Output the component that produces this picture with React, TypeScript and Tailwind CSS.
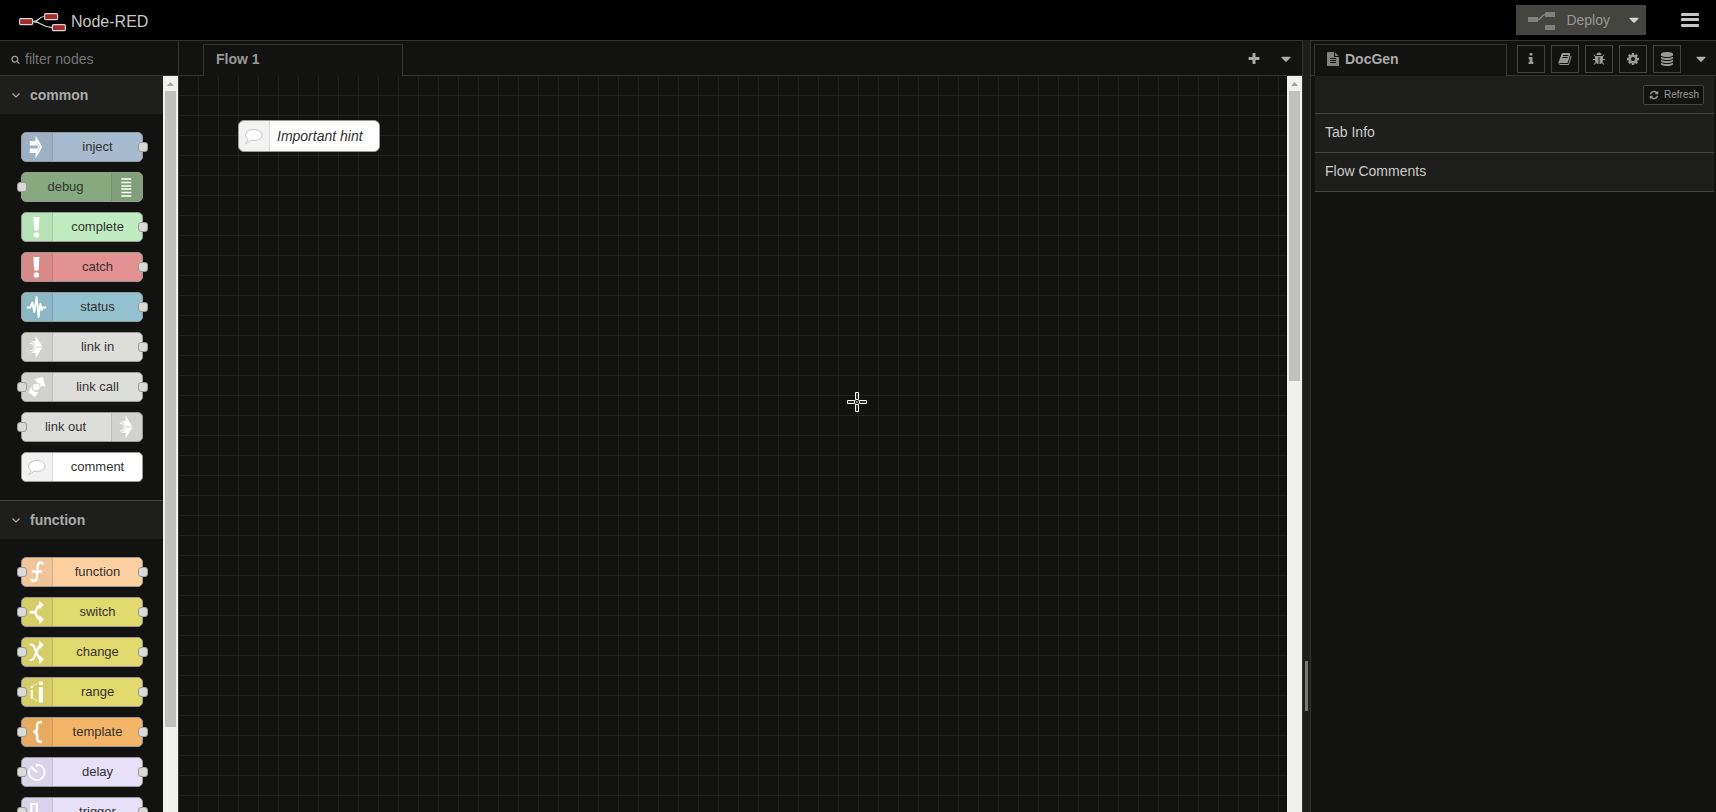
import type { ReactNode } from "react";

const FA = {
  caretDown:
    "M1408 704q0 26-19 45l-448 448q-19 19-45 19t-45-19l-448-448q-19-19-19-45t19-45 45-19h896q26 0 45 19t19 45z",
  plus: "M1600 736v192q0 40-28 68t-68 28h-416v416q0 40-28 68t-68 28h-192q-40 0-68-28t-28-68v-416h-416q-40 0-68-28t-28-68v-192q0-40 28-68t68-28h416v-416q0-40 28-68t68-28h192q40 0 68 28t28 68v416h416q40 0 68 28t28 68z",
  cog: "M1152 896q0-106-75-181t-181-75-181 75-75 181 75 181 181 75 181-75 75-181zm512-109v222q0 12-8 23t-20 13l-185 28q-19 54-39 91 35 50 107 138 10 12 10 25t-9 23q-27 37-99 108t-94 71q-12 0-26-9l-138-108q-44 23-91 38-16 136-29 186-7 28-36 28h-222q-14 0-24.500-8.500t-11.500-21.500l-28-184q-49-16-90-37l-141 107q-10 9-25 9-14 0-25-11-126-114-165-168-7-10-7-23 0-12 8-23 15-21 51-66.500t54-70.500q-27-50-41-99l-183-27q-13-2-21-12.500t-8-23.500v-222q0-12 8-23t19-13l186-28q14-46 39-92-40-57-107-138-10-12-10-24 0-10 9-23 26-36 98.500-107.500t94.500-71.500q13 0 26 10l138 107q44-23 91-38 16-136 29-186 7-28 36-28h222q14 0 24.500 8.500t11.500 21.500l28 184q49 16 90 37l142-107q9-9 24-9 13 0 25 10 129 119 165 170 7 8 7 22 0 12-8 23-15 21-51 66.500t-54 70.500q26 50 41 98l183 28q13 2 21 12.500t8 23.500z",
  search:
    "M1216 832q0-185-131.500-316.500t-316.500-131.500-316.500 131.500-131.500 316.500 131.500 316.500 316.500 131.500 316.500-131.500 131.500-316.500zm512 832q0 52-38 90t-90 38q-54 0-90-38l-343-342q-179 124-399 124-143 0-273.500-55.500t-225-150-150-225-55.500-273.500 55.500-273.500 150-225 225-150 273.500-55.500 273.500 55.500 225 150 150 225 55.500 273.500q0 220-124 399l343 343q37 37 37 90z",
  refresh:
    "M1639 1056q0 5-1 7-64 268-268 434.500t-478 166.500q-146 0-282.500-55t-243.500-157l-129 129q-19 19-45 19t-45-19-19-45v-448q0-26 19-45t45-19h448q26 0 45 19t19 45-19 45l-137 137q71 66 161 102t187 36q134 0 250-65t186-179q11-17 53-117 8-23 30-23h192q13 0 22.500 9.500t9.500 22.500zm25-800v448q0 26-19 45t-45 19h-448q-26 0-45-19t-19-45 19-45l138-138q-148-137-349-137-134 0-250 65t-186 179q-11 17-53 117-8 23-30 23h-199q-13 0-22.500-9.500t-9.500-22.500v-7q65-268 270-434.500t480-166.500q146 0 284 55.500t245 156.500l130-129q19-19 45-19t45 19 19 45z",
  info: "M1216 1344v128q0 26-19 45t-45 19h-512q-26 0-45-19t-19-45v-128q0-26 19-45t45-19h64v-384h-64q-26 0-45-19t-19-45v-128q0-26 19-45t45-19h384q26 0 45 19t19 45v576h64q26 0 45 19t19 45zm-128-1152v192q0 26-19 45t-45 19h-256q-26 0-45-19t-19-45v-192q0-26 19-45t45-19h256q26 0 45 19t19 45z",
  fileText:
    "M1596 476q14 14 28 36h-472v-472q22 14 36 28zm-476 164h544v1056q0 40-28 68t-68 28h-1344q-40 0-68-28t-28-68v-1600q0-40 28-68t68-28h800v544q0 40 28 68t68 28zm160 736v-64q0-14-9-23t-23-9h-704q-14 0-23 9t-9 23v64q0 14 9 23t23 9h704q14 0 23-9t9-23zm0-256v-64q0-14-9-23t-23-9h-704q-14 0-23 9t-9 23v64q0 14 9 23t23 9h704q14 0 23-9t9-23zm0-256v-64q0-14-9-23t-23-9h-704q-14 0-23 9t-9 23v64q0 14 9 23t23 9h704q14 0 23-9t9-23z",
  database:
    "M896 768q237 0 443-43t325-127v170q0 69-103 128t-280 93.500-385 34.500-385-34.500-280-93.500-103-128v-170q119 84 325 127t443 43zm0 768q237 0 443-43t325-127v170q0 69-103 128t-280 93.500-385 34.500-385-34.500-280-93.500-103-128v-170q119 84 325 127t443 43zm0-384q237 0 443-43t325-127v170q0 69-103 128t-280 93.500-385 34.500-385-34.500-280-93.500-103-128v-170q119 84 325 127t443 43zm0-1152q208 0 385 34.500t280 93.500 103 128v128q0 69-103 128t-280 93.500-385 34.500-385-34.500-280-93.500-103-128v-128q0-69 103-128t280-93.500 385-34.500z",
  book: "M1703 478q40 57 18 129l-275 906q-19 64-76.500 107.500t-122.500 43.500h-923q-77 0-148.500-53.500t-99.500-131.500q-24-67-2-127 0-4 3-27t4-37q1-8-3-21.500t-3-19.500q2-11 8-21t16.500-23.500 16.500-23.500q23-38 45-91.500t30-91.500q3-10 .5-30t-.5-28q3-11 17-28t17-23q21-36 42-92t25-90q1-9-2.500-32t.5-28q4-13 22-30.500t22-22.500q19-26 42.500-84.500t27.500-96.500q1-8-3-25.500t-2-26.500q2-8 9-18t18-23 17-21q8-12 16.500-30.500t15-35 16-36 19.500-32 26.500-23.500 36-11.500 47.500 5.500l-1 3q38-9 51-9h761q74 0 114 56t18 130l-274 906q-36 119-71.500 153.500t-128.500 34.500h-869q-27 0-38 15-11 16-1 43 24 70 144 70h923q29 0 56-15.500t35-41.500l300-987q7-22 5-57 38 15 59 43zm-1064 2q-4 13 2 22.500t20 9.500h608q13 0 25.500-9.500t16.500-22.500l21-64q4-13-2-22.500t-20-9.500h-608q-13 0-25.500 9.500t-16.500 22.500zm-83 256q-4 13 2 22.500t20 9.500h608q13 0 25.500-9.500t16.500-22.500l21-64q4-13-2-22.500t-20-9.500h-608q-13 0-25.500 9.500t-16.500 22.500z",
  bug: "M1696 960q0 26-19 45t-45 19h-224q0 171-67 290l208 209q19 19 19 45t-19 45q-18 19-45 19t-45-19l-198-197q-5 5-15 13t-42 28.500-65 36.500-82 29-97 13v-896h-128v896q-51 0-101.500-13.500t-87-33-66-39-43.500-32.500l-15-14-183 207q-20 21-48 21-24 0-43-16-19-18-20.500-44.500t15.500-46.500l202-227q-58-114-58-274h-224q-26 0-45-19t-19-45 19-45 45-19h224v-294l-173-173q-19-19-19-45t19-45 45-19 45 19l173 173h844l173-173q19-19 45-19t45 19 19 45-19 45l-173 173v294h224q26 0 45 19t19 45zm-480-576h-640q0-133 93.500-226.500t226.500-93.500 226.500 93.500 93.500 226.500z",
};

function Fa({ d, className = "size-3.5" }: { d: string; className?: string }) {
  return (
    <svg viewBox="0 0 1792 1792" fill="currentColor" aria-hidden="true" className={`${className} shrink-0`}>
      <path d={d} />
    </svg>
  );
}

const ICONS: Record<string, ReactNode> = {
  inject: (
    <>
      <path d="M8.500 8h5.800V2.800L21 14l-6.700 11.200V20H8.500v-4.600h8v-2.800h-8z" fill="#fff" />
      <path d="M16 10l2.500 4-2.500 4" fill="none" stroke="#9db0c3" strokeWidth=".6" />
    </>
  ),
  debug: <path d="M10 6h10M10 9.500h10M10 13h10M10 16h10M10 19.500h10M10 23h10" stroke="#fff" strokeWidth="1.300" />,
  alert: (
    <>
      <path d="M12 4h6.200l-1 13.500h-4.200z" fill="#fff" />
      <circle cx="15.100" cy="22" r="2.700" fill="#fff" />
    </>
  ),
  status: (
    <path
      d="M5.500 14.500H9l2-5 2 9.500 2.300-15 2 20 1.700-13 1.500 6 1-2.500h3.500"
      fill="none"
      stroke="#fff"
      strokeWidth="1.900"
      strokeLinejoin="round"
    />
  ),
  link: (
    <>
      <path
        d="M14.300 2.800L21 13.400h-7A5.800 5.800 0 0 0 9.500 8.300l4.800-.2zM14.300 25.200L21 14.600h-7a5.800 5.800 0 0 1-4.500 5.100l4.800.2z"
        fill="#fff"
      />
      <path d="M8.500 10.400h1a3.600 3.600 0 0 1 0 7.200h-1" fill="none" stroke="#fff" strokeWidth="1.200" />
    </>
  ),
  linkCall: (
    <g fill="#fff">
      <path d="M12 6.500L21.500 4l2.700 10-3.200-1.500-1.700 2.200A5 5 0 0 0 14 9l1.500-1.500z" />
      <circle cx="15" cy="14" r="3.300" />
      <path d="M10.500 13L7.300 19.500l6.400 4.500 3.500-5.300A5 5 0 0 1 10.500 13z" />
    </g>
  ),
  bubble: (
    <path
      d="M15.500 7.500c4.600 0 8.200 2.400 8.200 5.500s-3.600 5.500-8.200 5.500c-1 0-2-.1-2.900-.4-1.200 1.700-3 2.900-5.300 3.100 1.400-.9 2-2.100 2.200-4-1.400-1-2.200-2.500-2.200-4.100 0-3.200 3.600-5.600 8.200-5.600z"
      fill="#fff"
      stroke="#c4c4c2"
      strokeWidth="1"
    />
  ),
  function: (
    <path
      d="M21.500 6.500c-.3-2.800-4.700-3-5 1.500l-1 11.500c-.4 4.500-5 4-5.500 1.200M10.500 13.500h10"
      fill="none"
      stroke="#fff"
      strokeWidth="2.300"
    />
  ),
  switch: (
    <g fill="none" stroke="#fff" strokeWidth="2.400">
      <path d="M8.500 14.300H13c3-1 2-6.800 6.500-7.300h1M13 14.300c3 1 2 6.700 6.500 7.200h1" />
      <path d="M18 2.500l4.500 4.500-4.500 4.500zM18 17l4.500 4.500L18 26z" fill="#fff" stroke="none" />
    </g>
  ),
  change: (
    <g fill="none" stroke="#fff" strokeWidth="2.200">
      <path d="M8.500 6.500h1.300c2.200 0 2.700 1.500 3.700 4l3 7c1 2.500 1.500 4 4 4M8.500 22h1.300c2.200 0 2.700-1.500 3.700-4l3-7c1-2.500 1.500-4 4-4" />
      <path d="M18 2.500l4.500 4.500-4.500 4.500zM18 17l4.500 4.500L18 26z" fill="#fff" stroke="none" />
    </g>
  ),
  range: (
    <g fill="#fff">
      <path d="M17.500 3.500h4V7h-4zM17.500 9h4v15.500h-4zM9.500 8h2v2.200h-2zM9.500 12h2v8.500h-2z" />
      <path d="M12 7.500l5-2.500M12 20.500l5 2.500" stroke="#fff" strokeWidth="1" strokeDasharray="1.500 1" />
    </g>
  ),
  template: (
    <path
      d="M20.500 4c-4 0-4.700 1-4.700 3.500v3c0 2-1 3.200-3.800 3.200 2.800 0 3.800 1.200 3.800 3.200v3c0 2.500.7 4 4.700 4"
      fill="none"
      stroke="#fff"
      strokeWidth="2.500"
    />
  ),
  delay: (
    <g fill="none" stroke="#fff" strokeWidth="1.600">
      <path d="M15.500 6.500a7.800 7.800 0 1 1-6.700 3.800M15.500 6v3" />
      <path d="M9.500 8.500l6 5.500" strokeWidth="2.300" />
    </g>
  ),
  trigger: <path d="M7 21h3V6h5.500v15h6" fill="none" stroke="#fff" strokeWidth="2.200" />,
};

type NodeDef = {
  label: string;
  icon: string;
  bg: string;
  input?: boolean;
  output?: boolean;
  iconRight?: boolean;
};

const COMMON: NodeDef[] = [
  { label: "inject", icon: "inject", bg: "bg-[#a6bbcf]", output: true },
  { label: "debug", icon: "debug", bg: "bg-[#87a980]", input: true, iconRight: true },
  { label: "complete", icon: "alert", bg: "bg-[#c0edc0]", output: true },
  { label: "catch", icon: "alert", bg: "bg-[#e49191]", output: true },
  { label: "status", icon: "status", bg: "bg-[#94c1d0]", output: true },
  { label: "link in", icon: "link", bg: "bg-[#dddddb]", output: true },
  { label: "link call", icon: "linkCall", bg: "bg-[#dddddb]", input: true, output: true },
  { label: "link out", icon: "link", bg: "bg-[#dddddb]", input: true, iconRight: true },
  { label: "comment", icon: "bubble", bg: "bg-white" },
];

const FUNCTION: NodeDef[] = [
  { label: "function", icon: "function", bg: "bg-[#fdd0a2]", input: true, output: true },
  { label: "switch", icon: "switch", bg: "bg-[#e2d96e]", input: true, output: true },
  { label: "change", icon: "change", bg: "bg-[#e2d96e]", input: true, output: true },
  { label: "range", icon: "range", bg: "bg-[#e2d96e]", input: true, output: true },
  { label: "template", icon: "template", bg: "bg-[#f3b567]", input: true, output: true },
  { label: "delay", icon: "delay", bg: "bg-[#e6e0f8]", input: true, output: true },
  { label: "trigger", icon: "trigger", bg: "bg-[#e6e0f8]", input: true, output: true },
];

function NodeIcon({ name, right = false }: { name: string; right?: boolean }) {
  return (
    <span
      className={`flex w-[31px] shrink-0 self-stretch items-center justify-center border-black/10 bg-black/5 ${
        right ? "order-last rounded-r-[4px] border-l" : "rounded-l-[4px] border-r"
      }`}
    >
      <svg viewBox="0.7 0 30 28" className="h-7 w-[30px]" aria-hidden="true">
        {ICONS[name]}
      </svg>
    </span>
  );
}

function PaletteNode({ node }: { node: NodeDef }) {
  const port = "absolute top-[9px] size-2.5 rounded-[3px] border border-[#999997] bg-[#d9d9d6]";
  return (
    <li className={`relative flex h-[30px] w-[122px] items-center rounded-[5px] border border-[#999997] ${node.bg}`}>
      <NodeIcon name={node.icon} right={node.iconRight} />
      <span className={`flex-1 text-center text-[13px] leading-5 text-[#333331] ${node.iconRight ? "pr-0.5" : ""}`}>
        {node.label}
      </span>
      {node.input && <span className={`${port} -left-[5px]`} />}
      {node.output && <span className={`${port} -right-[6px]`} />}
    </li>
  );
}

function Category({ title, nodes, divided }: { title: string; nodes: NodeDef[]; divided?: boolean }) {
  return (
    <section>
      <button
        type="button"
        className={`flex w-full items-center bg-[#1e1e1c] pl-[11px] text-left text-sm font-bold text-[#aaaaa8] ${
          divided ? "h-[39px] border-t border-[#444442]" : "h-[38px]"
        }`}
      >
        <svg viewBox="0 0 10 10" className="mr-[9px] size-2.5" aria-hidden="true">
          <path d="M1.500 3.500L5 7l3.500-3.500" fill="none" stroke="currentColor" strokeWidth="1.200" />
        </svg>
        {title}
      </button>
      <ul className="flex flex-col gap-2.5 py-[18px] pl-[21px]">
        {nodes.map((n) => (
          <PaletteNode key={n.label} node={n} />
        ))}
      </ul>
    </section>
  );
}

function Scrollbar({ thumb }: { thumb: string }) {
  return (
    <div className="flex w-[15px] shrink-0 flex-col items-center bg-[#f0f0ee]" aria-hidden="true">
      <svg viewBox="0 0 15 15" className="size-[15px] shrink-0">
        <path d="M4 10l3.500-4L11 10z" fill="#a0a09e" />
      </svg>
      <div className={`w-[11px] bg-[#c0c0be] ${thumb}`} />
    </div>
  );
}

const SIDE_TABS = [
  { name: "Information", d: FA.info },
  { name: "Help", d: FA.book },
  { name: "Debug", d: FA.bug },
  { name: "Configuration", d: FA.cog },
  { name: "Context data", d: FA.database },
];

export default function App() {
  return (
    <div className="flex h-screen flex-col overflow-hidden bg-[#121210] font-['Liberation_Sans',Arial,sans-serif] text-sm text-[#aaaaa8]">
      <header className="flex h-10 shrink-0 items-center justify-between bg-black pl-[19px] pr-[17px]">
        <a href="#" className="flex items-center gap-[5px] pt-1 text-base text-[#c7c7c5]">
          <svg viewBox="0 0 47 20" className="h-5 w-[47px]" aria-hidden="true">
            <g fill="none" stroke="#d4d4d2" strokeWidth="1.200">
              <path d="M14 9.700c7 0 5-5.200 11.500-5.200M14 9.700c9 0 9 6 19.500 6" />
              <g fill="#a02c2c">
                <rect x=".6" y="6.600" width="13" height="6" rx="1.200" />
                <rect x="25.600" y="1.600" width="13" height="6" rx="1.200" />
                <rect x="33.400" y="12.600" width="13" height="6" rx="1.200" />
              </g>
            </g>
          </svg>
          Node-RED
        </a>
        <div className="flex items-center">
          <div className="flex h-[30px] bg-[#444440] text-[#989894]">
            <button type="button" className="flex items-center gap-[11px] px-3">
              <svg viewBox="0 0 27 18" className="mt-0.5 h-[18px] w-[27px]" aria-hidden="true">
                <path d="M0 5h10v5H0zM17 0h10v5H17zM17 13h10v5H17z" fill="#80807e" />
                <path d="M10 7.500c4 0 3-5 7-5" fill="none" stroke="#80807e" strokeWidth="1.500" />
              </svg>
              Deploy
            </button>
            <button type="button" aria-label="Deploy options" className="flex w-6 items-center justify-center text-[#d4d4d2]">
              <Fa d={FA.caretDown} className="size-4" />
            </button>
          </div>
          <button type="button" aria-label="Main menu" className="ml-[35px] text-[#c7c7c5]">
            <svg viewBox="0 0 18 14" className="h-3.5 w-[18px]" fill="currentColor" aria-hidden="true">
              <rect width="18" height="3" rx="1" />
              <rect y="5" width="18" height="3" rx="1" />
              <rect y="11" width="18" height="3" rx="1" />
            </svg>
          </button>
        </div>
      </header>

      <div className="flex min-h-0 flex-1">
        <aside className="flex w-[179px] shrink-0 flex-col border-r border-t border-[#333331]">
          <label className="flex h-[35px] shrink-0 items-center gap-[5px] border-b border-[#333331] pl-[11px] pt-0.5">
            <Fa d={FA.search} className="size-[9px] text-[#a0a09e]" />
            <input
              type="text"
              aria-label="filter nodes"
              placeholder="filter nodes"
              className="w-full min-w-0 bg-transparent text-sm outline-none placeholder:text-[#777775]"
            />
          </label>
          <div className="flex min-h-0 flex-1">
            <div className="min-w-0 flex-1 overflow-hidden">
              <Category title="common" nodes={COMMON} />
              <Category title="function" nodes={FUNCTION} divided />
            </div>
            <Scrollbar thumb="h-[636px]" />
          </div>
        </aside>

        <main className="flex min-w-0 flex-1 flex-col border-r border-t border-[#333331]">
          <nav className="flex h-[35px] shrink-0 items-stretch">
            <span className="w-6 border-b border-[#333331]" />
            <button
              type="button"
              className="mt-[3px] w-[200px] border-x border-t border-[#333331] pb-1 pl-3 text-left font-bold text-[#999997]"
            >
              Flow 1
            </button>
            <span className="flex flex-1 items-center justify-end border-b border-[#333331] pt-0.5">
              <button type="button" aria-label="Add flow" className="flex w-8 justify-center">
                <Fa d={FA.plus} />
              </button>
              <button type="button" aria-label="List flows" className="flex w-8 justify-center">
                <Fa d={FA.caretDown} className="size-4" />
              </button>
            </span>
          </nav>
          <div className="flex min-h-0 flex-1">
            <div className="relative flex-1 overflow-hidden bg-[linear-gradient(to_right,transparent_19px,#20201e_19px),linear-gradient(to_bottom,transparent_19px,#20201e_19px)] bg-[size:20px_20px]">
              <div className="absolute left-[59px] top-11 flex h-8 w-[142px] items-center rounded-[6px] border border-[#999997] bg-white">
                <NodeIcon name="bubble" />
                <span className="pl-[7px] italic text-[#333331]">Important hint</span>
              </div>
              <svg
                viewBox="0 0 20 20"
                className="absolute left-[668px] top-[316px] size-5"
                fill="#30302e"
                stroke="#fff"
                aria-hidden="true"
              >
                <path d="M8.500 7.500v-7h3v7zM8.500 12.500v7h3v-7zM7.500 8.500h-7v3h7zM12.500 8.500h7v3h-7z" />
                <path d="M8 8l4 4M12 8l-4 4" stroke="#888886" />
              </svg>
            </div>
            <Scrollbar thumb="h-[290px]" />
          </div>
        </main>

        <div className="flex w-[7px] shrink-0 flex-col bg-[#1e1e1c] pl-0.5 pt-[621px]">
          <span className="h-[50px] w-[3px] bg-[#777775]" />
        </div>

        <aside className="flex w-[406px] shrink-0 flex-col border-l border-t border-[#333331]">
          <nav className="flex h-[35px] shrink-0 items-stretch">
            <span className="w-[3px] border-b border-[#333331]" />
            <button
              type="button"
              className="mt-[3px] flex w-[193px] items-center gap-[5px] border-x border-t border-[#333331] pb-1 pl-[11px] font-bold text-[#aaaaa8]"
            >
              <Fa d={FA.fileText} className="size-3.5 text-[#80807e]" />
              DocGen
            </button>
            <span className="flex flex-1 items-center gap-1.5 border-b border-[#333331] pl-2.5 pr-0.5 pt-0.5">
              {SIDE_TABS.map((t) => (
                <button
                  key={t.name}
                  type="button"
                  aria-label={t.name}
                  className="flex size-7 shrink-0 items-center justify-center border border-[#444442] text-[#999997]"
                >
                  <Fa d={t.d} />
                </button>
              ))}
              <button type="button" aria-label="More tabs" className="flex flex-1 justify-center">
                <Fa d={FA.caretDown} className="size-4" />
              </button>
            </span>
          </nav>
          <div className="ml-1 mr-0.5">
            <div className="flex h-[38px] items-center justify-end border-b border-[#444442] bg-[#1e1e1c] pr-2.5">
              <button
                type="button"
                className="flex h-5 items-center gap-[5px] rounded-[2px] border border-[#444442] bg-[#121210] pl-[5px] pr-1 pt-px text-[10px] text-[#999997]"
              >
                <Fa d={FA.refresh} className="size-2.5" />
                Refresh
              </button>
            </div>
            {["Tab Info", "Flow Comments"].map((t) => (
              <button
                key={t}
                type="button"
                className="flex h-[39px] w-full items-center border-b border-[#444442] bg-[#1e1e1c] pb-0.5 pl-2.5 text-left text-[#ccccca]"
              >
                {t}
              </button>
            ))}
          </div>
        </aside>
      </div>
    </div>
  );
}
